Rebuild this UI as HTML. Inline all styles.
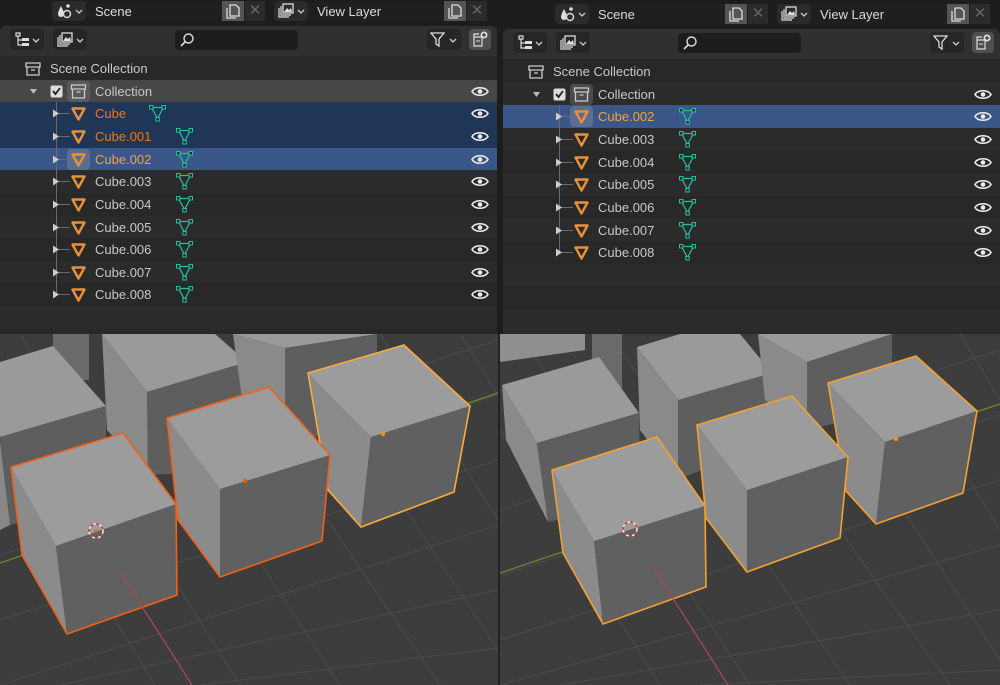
<!DOCTYPE html>
<html><head><meta charset="utf-8"><style>
*{margin:0;padding:0;box-sizing:border-box}
body{width:1000px;height:685px;background:#1d1d1d;position:relative;overflow:hidden;font-family:"Liberation Sans","DejaVu Sans",sans-serif;font-size:13px;color:#c8c8c8}
.abs{position:absolute}
.btn{position:absolute;background:#2b2b2b;border-radius:4px}
.fld{position:absolute;background:#1f1f1f;color:#dcdcdc;padding-left:9px;line-height:21px}
.copy{position:absolute;background:#555;}
.x{position:absolute;background:#2b2b2b;color:#666;text-align:center;line-height:20px;font-size:15px}
.panel{position:absolute;background:#282828;border-radius:6px 6px 0 0;overflow:hidden}
.phead{position:absolute;left:0;top:0;right:0;height:30px;background:#303030}
.rows{position:absolute;left:0;right:0;top:31px}
.row{position:relative;height:22.65px;line-height:23.5px}
.row.a{background:#2b2b2b}.row.b{background:#282828}
.row.col{background:#474747}.row.sel{background:#1f3657}.row.act{background:#3b5689}
.row span.t{position:absolute;top:0}
.row svg{position:absolute}
.o{color:#e8781c}.y{color:#f2a436}
</style></head><body>

<div class="btn" style="left:52px;top:1px;width:34px;height:20px"></div>
<svg class="abs" style="left:56px;top:3px" width="28" height="17"><path d="M5 3 C3 7 2 9 2 11 a3 3 0 0 0 6 0 C8 9 7 7 5 3Z" fill="#ddd"/><circle cx="11" cy="11" r="3.5" fill="none" stroke="#ddd" stroke-width="1.4"/><circle cx="12" cy="3" r="1.8" fill="#ddd"/><path d="M20 7 l3 3 3-3" stroke="#ccc" fill="none" stroke-width="1.3"/></svg>
<div class="fld" style="left:86px;top:1px;width:136px;height:20px">Scene</div>
<div class="copy" style="left:222px;top:1px;width:22px;height:20px"></div>
<svg class="abs" style="left:225px;top:3px" width="16" height="16"><path d="M5 2h6l3 3v8H5z M2 5v10h9" fill="none" stroke="#ddd" stroke-width="1.3"/></svg>
<div class="x" style="left:245px;top:1px;width:20px;height:20px">✕</div>

<div class="btn" style="left:274px;top:1px;width:34px;height:20px"></div>
<svg class="abs" style="left:278px;top:3px" width="28" height="17"><rect x="5" y="1" width="10" height="9" fill="none" stroke="#ddd" stroke-width="1.3"/><path d="M3 3v9h10 M1 5v9h10" fill="none" stroke="#ddd" stroke-width="1.2"/><path d="M6 9l3-4 2 2 2-2 1 4z" fill="#ddd"/><path d="M20 7 l3 3 3-3" stroke="#ccc" fill="none" stroke-width="1.3"/></svg>
<div class="fld" style="left:308px;top:1px;width:136px;height:20px">View Layer</div>
<div class="copy" style="left:444px;top:1px;width:22px;height:20px"></div>
<svg class="abs" style="left:447px;top:3px" width="16" height="16"><path d="M5 2h6l3 3v8H5z M2 5v10h9" fill="none" stroke="#ddd" stroke-width="1.3"/></svg>
<div class="x" style="left:467px;top:1px;width:20px;height:20px">✕</div>

<div class="btn" style="left:555px;top:4px;width:34px;height:20px"></div>
<svg class="abs" style="left:559px;top:6px" width="28" height="17"><path d="M5 3 C3 7 2 9 2 11 a3 3 0 0 0 6 0 C8 9 7 7 5 3Z" fill="#ddd"/><circle cx="11" cy="11" r="3.5" fill="none" stroke="#ddd" stroke-width="1.4"/><circle cx="12" cy="3" r="1.8" fill="#ddd"/><path d="M20 7 l3 3 3-3" stroke="#ccc" fill="none" stroke-width="1.3"/></svg>
<div class="fld" style="left:589px;top:4px;width:136px;height:20px">Scene</div>
<div class="copy" style="left:725px;top:4px;width:22px;height:20px"></div>
<svg class="abs" style="left:728px;top:6px" width="16" height="16"><path d="M5 2h6l3 3v8H5z M2 5v10h9" fill="none" stroke="#ddd" stroke-width="1.3"/></svg>
<div class="x" style="left:748px;top:4px;width:20px;height:20px">✕</div>
<div class="btn" style="left:777px;top:4px;width:34px;height:20px"></div>
<svg class="abs" style="left:781px;top:6px" width="28" height="17"><rect x="5" y="1" width="10" height="9" fill="none" stroke="#ddd" stroke-width="1.3"/><path d="M3 3v9h10 M1 5v9h10" fill="none" stroke="#ddd" stroke-width="1.2"/><path d="M6 9l3-4 2 2 2-2 1 4z" fill="#ddd"/><path d="M20 7 l3 3 3-3" stroke="#ccc" fill="none" stroke-width="1.3"/></svg>
<div class="fld" style="left:811px;top:4px;width:136px;height:20px">View Layer</div>
<div class="copy" style="left:947px;top:4px;width:22px;height:20px"></div>
<svg class="abs" style="left:950px;top:6px" width="16" height="16"><path d="M5 2h6l3 3v8H5z M2 5v10h9" fill="none" stroke="#ddd" stroke-width="1.3"/></svg>
<div class="x" style="left:970px;top:4px;width:20px;height:20px">✕</div>

<div class="panel" style="left:0;top:26px;width:497px;height:308px">
 <div class="phead">
  <div class="btn" style="left:10px;top:3px;width:34px;height:21px;background:#262626"></div>
  <svg class="abs" style="left:14px;top:6px" width="28" height="16"><path d="M2 1h4v3H2z M4 4v9h4 M4 8h4" fill="none" stroke="#ddd" stroke-width="1.2"/><rect x="8" y="6" width="7" height="3" fill="#ddd"/><rect x="8" y="11" width="7" height="3" fill="#ddd"/><path d="M19 7 l3 3 3-3" stroke="#ccc" fill="none" stroke-width="1.3"/></svg>
  <div class="btn" style="left:53px;top:3px;width:34px;height:21px;background:#262626"></div>
  <svg class="abs" style="left:57px;top:6px" width="28" height="16"><rect x="5" y="1" width="10" height="9" fill="none" stroke="#ddd" stroke-width="1.3"/><path d="M3 3v9h10 M1 5v9h10" fill="none" stroke="#ddd" stroke-width="1.2"/><path d="M6 9l3-4 2 2 2-2 1 4z" fill="#ddd"/><path d="M20 7 l3 3 3-3" stroke="#ccc" fill="none" stroke-width="1.3"/></svg>
  <div class="abs" style="left:175px;top:4px;width:123px;height:20px;background:#1d1d1d;border-radius:4px"></div>
  <svg class="abs" style="left:179px;top:6px" width="16" height="16"><circle cx="9.5" cy="6.5" r="4.5" fill="none" stroke="#ddd" stroke-width="1.4"/><path d="M6 10l-4 4" stroke="#ddd" stroke-width="1.6"/></svg>
  <div class="btn" style="left:427px;top:3px;width:34px;height:21px;background:#262626"></div>
  <svg class="abs" style="left:430px;top:6px" width="30" height="16"><path d="M1 1h13l-5 6v7l-3-2V7z" fill="none" stroke="#ddd" stroke-width="1.3"/><path d="M20 7 l3 3 3-3" stroke="#ccc" fill="none" stroke-width="1.3"/></svg>
  <div class="btn" style="left:469px;top:3px;width:22px;height:21px;background:#505050"></div>
  <svg class="abs" style="left:472px;top:5px" width="17" height="17"><path d="M2 6h8v9H2z M2 6l0-3h5" fill="none" stroke="#ddd" stroke-width="1.2"/><path d="M4 10h4" stroke="#ddd"/><circle cx="12" cy="4" r="3.5" fill="#ddd"/><path d="M12 2v4M10 4h4" stroke="#333" stroke-width="1.2"/></svg>
 </div>
 <div class="rows">
  <div class="row b"><svg style="left:25px;top:4px" width="16" height="16"><path d="M1 2h14v4H1z M2 6v8h12V6 M6 9h4" fill="none" stroke="#ccc" stroke-width="1.3"/></svg><span class="t" style="left:50px">Scene Collection</span></div>
  <div class="row col"><svg style="left:30px;top:8px" width="8" height="8"><path d="M0 1h7l-3.5 5z" fill="#bbb"/></svg><svg style="left:50px;top:5px" width="13" height="13"><rect x="0.5" y="0.5" width="12" height="12" rx="2" fill="#ddd"/><path d="M3 6l2.5 3 4.5-6" stroke="#222" stroke-width="1.8" fill="none"/></svg><div class="abs" style="left:67px;top:1px;width:23px;height:21px;background:#5a5a5a;border-radius:4px"></div><svg style="left:70px;top:3px" width="17" height="17"><path d="M1.5 2h14v4h-14z M2.5 6v9h12V6 M6.5 9h4" fill="none" stroke="#ccc" stroke-width="1.3"/></svg><span class="t" style="left:95px">Collection</span><svg style="left:471px;top:5px" width="18" height="13"><path d="M1 6.5C4 1.5 14 1.5 17 6.5 14 11.5 4 11.5 1 6.5Z" fill="none" stroke="#eee" stroke-width="1.6"/><circle cx="9" cy="6.5" r="2.3" fill="#eee"/></svg></div>
 </div>
</div>

<div class="panel" style="left:503px;top:29px;width:497px;height:305px">
 <div class="phead">
  <div class="btn" style="left:10px;top:3px;width:34px;height:21px;background:#262626"></div>
  <svg class="abs" style="left:14px;top:6px" width="28" height="16"><path d="M2 1h4v3H2z M4 4v9h4 M4 8h4" fill="none" stroke="#ddd" stroke-width="1.2"/><rect x="8" y="6" width="7" height="3" fill="#ddd"/><rect x="8" y="11" width="7" height="3" fill="#ddd"/><path d="M19 7 l3 3 3-3" stroke="#ccc" fill="none" stroke-width="1.3"/></svg>
  <div class="btn" style="left:53px;top:3px;width:34px;height:21px;background:#262626"></div>
  <svg class="abs" style="left:57px;top:6px" width="28" height="16"><rect x="5" y="1" width="10" height="9" fill="none" stroke="#ddd" stroke-width="1.3"/><path d="M3 3v9h10 M1 5v9h10" fill="none" stroke="#ddd" stroke-width="1.2"/><path d="M6 9l3-4 2 2 2-2 1 4z" fill="#ddd"/><path d="M20 7 l3 3 3-3" stroke="#ccc" fill="none" stroke-width="1.3"/></svg>
  <div class="abs" style="left:175px;top:4px;width:123px;height:20px;background:#1d1d1d;border-radius:4px"></div>
  <svg class="abs" style="left:179px;top:6px" width="16" height="16"><circle cx="9.5" cy="6.5" r="4.5" fill="none" stroke="#ddd" stroke-width="1.4"/><path d="M6 10l-4 4" stroke="#ddd" stroke-width="1.6"/></svg>
  <div class="btn" style="left:427px;top:3px;width:34px;height:21px;background:#262626"></div>
  <svg class="abs" style="left:430px;top:6px" width="30" height="16"><path d="M1 1h13l-5 6v7l-3-2V7z" fill="none" stroke="#ddd" stroke-width="1.3"/><path d="M20 7 l3 3 3-3" stroke="#ccc" fill="none" stroke-width="1.3"/></svg>
  <div class="btn" style="left:469px;top:3px;width:22px;height:21px;background:#505050"></div>
  <svg class="abs" style="left:472px;top:5px" width="17" height="17"><path d="M2 6h8v9H2z M2 6l0-3h5" fill="none" stroke="#ddd" stroke-width="1.2"/><path d="M4 10h4" stroke="#ddd"/><circle cx="12" cy="4" r="3.5" fill="#ddd"/><path d="M12 2v4M10 4h4" stroke="#333" stroke-width="1.2"/></svg>
 </div>
 <div class="rows">
  <div class="row b"><svg style="left:25px;top:4px" width="16" height="16"><path d="M1 2h14v4H1z M2 6v8h12V6 M6 9h4" fill="none" stroke="#ccc" stroke-width="1.3"/></svg><span class="t" style="left:50px">Scene Collection</span></div>
  <div class="row a"><svg style="left:30px;top:8px" width="8" height="8"><path d="M0 1h7l-3.5 5z" fill="#bbb"/></svg><svg style="left:50px;top:5px" width="13" height="13"><rect x="0.5" y="0.5" width="12" height="12" rx="2" fill="#ddd"/><path d="M3 6l2.5 3 4.5-6" stroke="#222" stroke-width="1.8" fill="none"/></svg><div class="abs" style="left:67px;top:1px;width:23px;height:21px;background:#4a4a4a;border-radius:4px"></div><svg style="left:70px;top:3px" width="17" height="17"><path d="M1.5 2h14v4h-14z M2.5 6v9h12V6 M6.5 9h4" fill="none" stroke="#ccc" stroke-width="1.3"/></svg><span class="t" style="left:95px">Collection</span><svg style="left:471px;top:5px" width="18" height="13"><path d="M1 6.5C4 1.5 14 1.5 17 6.5 14 11.5 4 11.5 1 6.5Z" fill="none" stroke="#eee" stroke-width="1.6"/><circle cx="9" cy="6.5" r="2.3" fill="#eee"/></svg></div>
 </div>
</div>

<div id="lrows" class="abs" style="left:0;top:102.3px;width:497px"></div>
<div id="rrows" class="abs" style="left:503px;top:105.3px;width:497px"></div>

<svg class="abs" style="left:0;top:334px" width="498" height="351" viewBox="0 334 498 351">
 <rect x="0" y="334" width="498" height="351" fill="#3d3d3d"/>
 <g stroke="#4b4b4b" stroke-width="1">
  <path d="M0 620 L498 460 M0 685 L498 525 M60 685 L498 590 M0 555 L498 395 M0 500 L498 340 M200 685 L498 648"/>
  <path d="M-60 334 L155 685 M20 334 L240 685 M110 334 L340 685 M200 334 L440 685 M290 334 L498 650 M380 334 L498 520 M460 334 L498 395"/>
 </g>
 <path d="M0 563 L498 393" stroke="#6a8e2a" stroke-width="1.2"/>
 <rect x="53" y="334" width="36" height="46" fill="#6a6a6a"/>
 <polygon points="0,362 53,346 106,406 0,437" fill="#9a9a9a"/>
 <polygon points="0,437 106,406 106,500 10,525" fill="#5e5e5e"/>
 <polygon points="0,440 10,525 0,530" fill="#888"/>
 <polygon points="102,334 215,334 247,362 147,392" fill="#9a9a9a"/>
 <polygon points="102,334 147,392 148,475 107,430" fill="#8a8a8a"/>
 <polygon points="147,392 247,362 247,470 148,475" fill="#5e5e5e"/>
 <polygon points="233,334 377,334 285,348" fill="#9a9a9a"/>
 <polygon points="233,334 285,348 285,440 245,420" fill="#8a8a8a"/>
 <polygon points="285,348 377,334 377,430 285,440" fill="#5e5e5e"/>
 <g>
  <polygon points="308,373 371,437 361,527 328,490" fill="#8b8b8b"/><polygon points="371,437 470,406 454,492 361,527" fill="#606060"/><polygon points="308,373 404,345 470,406 371,437" fill="#9c9c9c"/>
  <polygon points="308,373 404,345 470,406 454,492 361,527 328,490" fill="none" stroke="#ffaa3a" stroke-width="1.6"/>
  <circle cx="383" cy="434" r="2" fill="#f90"/>
 </g>
 <g>
  <polygon points="167,418 220,489 220,577 178,520" fill="#8b8b8b"/><polygon points="220,489 330,455 322,541 220,577" fill="#606060"/><polygon points="167,418 269,387 330,455 220,489" fill="#9c9c9c"/>
  <polygon points="167,418 269,387 330,455 322,541 220,577 178,520" fill="none" stroke="#f06018" stroke-width="1.6"/>
  <circle cx="245" cy="481" r="2.2" fill="#e85a10"/>
 </g>
 <g>
  <polygon points="11,467 56,546 67,634 22,555" fill="#8b8b8b"/><polygon points="56,546 176,504 177,595 67,634" fill="#606060"/><polygon points="11,467 123,433 176,504 56,546" fill="#9c9c9c"/>
  <polygon points="11,467 123,433 176,504 177,595 67,634 22,555" fill="none" stroke="#f06018" stroke-width="1.6"/>
 </g>
 <path d="M120 572 L192 685" stroke="#a8445a" stroke-width="1.3"/>
 <circle cx="96" cy="531" r="7" fill="none" stroke="#eee" stroke-width="1.5" stroke-dasharray="3 3"/><circle cx="96" cy="531" r="7" fill="none" stroke="#d33" stroke-width="1.5" stroke-dasharray="3 3" stroke-dashoffset="3"/><circle cx="96" cy="531" r="1.5" fill="#e60"/>
</svg>
<div class="abs" style="left:498px;top:334px;width:2px;height:351px;background:#222"></div>

<svg class="abs" style="left:500px;top:334px" width="500" height="351" viewBox="500 334 500 351">
 <rect x="500" y="334" width="500" height="351" fill="#3d3d3d"/>
 <g stroke="#4b4b4b" stroke-width="1">
  <path d="M500 640 L1000 480 M500 685 L1000 545 M560 685 L1000 610 M500 575 L1000 415 M500 510 L1000 350 M700 685 L1000 670"/>
  <path d="M440 334 L660 685 M520 334 L750 685 M610 334 L850 685 M700 334 L950 685 M790 334 L1000 660 M880 334 L1000 530 M960 334 L1000 400"/>
 </g>
 <path d="M500 573 L1000 404" stroke="#6a8e2a" stroke-width="1.2"/>
 <polygon points="500,334 585,334 585,350 500,362" fill="#8f8f8f"/>
 <rect x="592" y="334" width="30" height="56" fill="#6a6a6a"/>
 <polygon points="502,385 599,357 639,413 537,443" fill="#9a9a9a"/>
 <polygon points="502,385 537,443 548,522 506,440" fill="#8a8a8a"/>
 <polygon points="537,443 639,413 640,500 548,522" fill="#5e5e5e"/>
 <polygon points="637,347 680,334 740,334 772,373 678,400" fill="#9a9a9a"/>
 <polygon points="637,347 678,400 678,480 640,430" fill="#8a8a8a"/>
 <polygon points="678,400 772,373 772,440 678,480" fill="#5e5e5e"/>
 <polygon points="758,334 892,334 807,362" fill="#9a9a9a"/>
 <polygon points="758,334 807,362 807,430 765,400" fill="#8a8a8a"/>
 <polygon points="807,362 892,334 892,410 807,430" fill="#5e5e5e"/>
 <g>
  <polygon points="828,383 885,442 876,524 846,491" fill="#8b8b8b"/><polygon points="885,442 977,411 963,493 876,524" fill="#606060"/><polygon points="828,383 916,356 977,411 885,442" fill="#9c9c9c"/>
  <polygon points="828,383 916,356 977,411 963,493 876,524 846,491" fill="none" stroke="#f5a030" stroke-width="1.6"/>
  <circle cx="896" cy="439" r="2" fill="#f90"/>
 </g>
 <g>
  <polygon points="697,425 747,490 747,572 706,518" fill="#8b8b8b"/><polygon points="747,490 848,457 840,538 747,572" fill="#606060"/><polygon points="697,425 792,396 848,457 747,490" fill="#9c9c9c"/>
  <polygon points="697,425 792,396 848,457 840,538 747,572 706,518" fill="none" stroke="#f5a030" stroke-width="1.6"/>
 </g>
 <g>
  <polygon points="552,470 594,541 603,624 563,553" fill="#8b8b8b"/><polygon points="594,541 705,506 706,587 603,624" fill="#606060"/><polygon points="552,470 657,437 705,506 594,541" fill="#9c9c9c"/>
  <polygon points="552,470 657,437 705,506 706,587 603,624 563,553" fill="none" stroke="#f5a030" stroke-width="1.6"/>
 </g>
 <path d="M653 567 L728 685" stroke="#a8445a" stroke-width="1.3"/>
 <circle cx="630" cy="529" r="7" fill="none" stroke="#eee" stroke-width="1.5" stroke-dasharray="3 3"/><circle cx="630" cy="529" r="7" fill="none" stroke="#d33" stroke-width="1.5" stroke-dasharray="3 3" stroke-dashoffset="3"/>
</svg>

<script>
function rowsHTML(items, start){
 var h='';
 var obj='<svg style="left:70px;top:3px" width="17" height="17"><path d="M2.5 3.5h12l-6 11z" fill="none" stroke="#e8913a" stroke-width="2.4" stroke-linejoin="round"/></svg>';
 var eye='<svg style="left:471px;top:5px" width="18" height="13"><path d="M1 6.5C4 1.5 14 1.5 17 6.5 14 11.5 4 11.5 1 6.5Z" fill="none" stroke="#eee" stroke-width="1.6"/><circle cx="9" cy="6.5" r="2.3" fill="#eee"/></svg>';
 for(var i=0;i<items.length;i++){
  var it=items[i];
  var cls=it.cls||((start+i)%2?'a':'b');
  h+='<div class="row '+cls+'">';
  if(it.name){
   h+='<div class="abs" style="left:56px;top:0;width:1px;height:'+(it.last?'11px':'22.65px')+';background:#6a6a6a"></div>';
   h+='<div class="abs" style="left:56px;top:11px;width:14px;height:1px;background:#6a6a6a"></div>';
   h+='<svg style="left:52px;top:7px" width="8" height="9"><path d="M1 0.5v8l6-4z" fill="#ccc"/></svg>';
   if(it.act) h+='<div class="abs" style="left:67px;top:1px;width:23px;height:21px;background:#5a6e94;border-radius:4px"></div>';
   h+=obj;
   h+='<span class="t '+(it.c||'')+'" style="left:95px">'+it.name+'</span>';
   var mx=it.name=='Cube'?148:175;
   h+='<svg style="left:'+mx+'px;top:2px" width="19" height="19"><path d="M3.5 3.5h12l-6 11z" fill="none" stroke="#25c0a0" stroke-width="1.2"/><rect x="1.5" y="1.5" width="3.5" height="3.5" fill="#282828" stroke="#25c0a0"/><rect x="14" y="1.5" width="3.5" height="3.5" fill="#282828" stroke="#25c0a0"/><rect x="7.8" y="13.5" width="3.5" height="3.5" fill="#282828" stroke="#25c0a0"/></svg>';
   h+=eye;
  }
  h+='</div>';
 }
 return h;
}
var L=[{name:'Cube',cls:'sel',c:'o'},{name:'Cube.001',cls:'sel',c:'o'},{name:'Cube.002',cls:'act',c:'y',act:1}];
for(var k=3;k<=8;k++)L.push({name:'Cube.00'+k});
L[L.length-1].last=1;
L.push({});
document.getElementById('lrows').innerHTML=rowsHTML(L,0);
var R=[{name:'Cube.002',cls:'act',c:'y',act:1}];
for(var k=3;k<=8;k++)R.push({name:'Cube.00'+k});
R[R.length-1].last=1;
R.push({});R.push({});R.push({});R.push({});
document.getElementById('rrows').innerHTML=rowsHTML(R,0);
</script>
</body></html>
